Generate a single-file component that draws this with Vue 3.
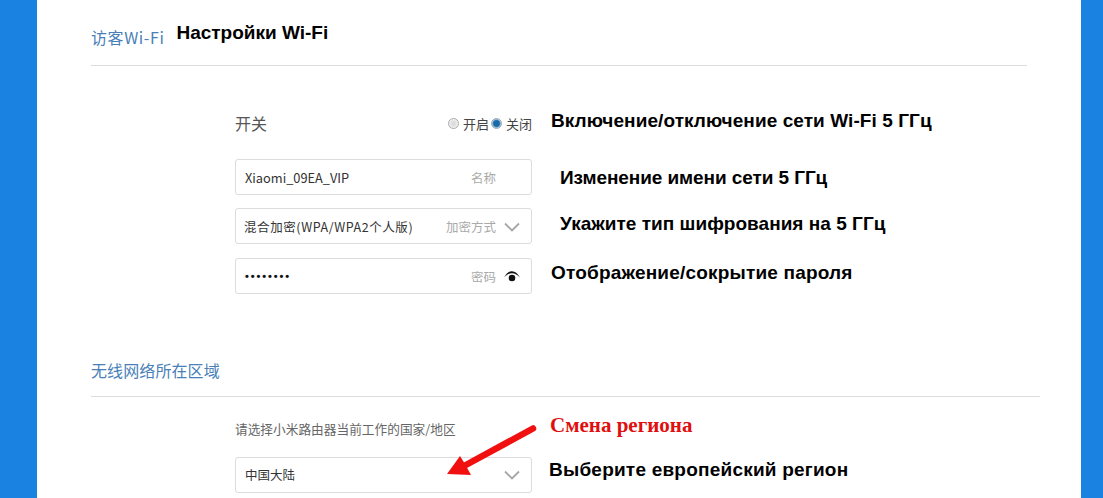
<script setup>
const fields = [
  { id: 'name', value: 'Xiaomi_09EA_VIP', label: '名称', icon: '', note: 'Изменение имени сети 5 ГГц', indent: true },
  { id: 'enc', value: '混合加密(WPA/WPA2个人版)', label: '加密方式', icon: 'chevron', note: 'Укажите тип шифрования на 5 ГГц', indent: true },
  { id: 'pwd', value: '••••••••', label: '密码', icon: 'eye', note: 'Отображение/сокрытие пароля', indent: false }
]
</script>

<template>
  <div class="page">
    <main class="card">
      <header class="head head-first">
        <h2 class="title">访客Wi-Fi</h2>
        <span class="note note-title">Настройки Wi-Fi</span>
      </header>

      <section class="rows rows-first">
        <div class="row row-switch">
          <div class="control switch">
            <span class="switch-label">开关</span>
            <span class="radios">
              <i class="radio"></i><span>开启</span>
              <i class="radio radio-on"></i><span>关闭</span>
            </span>
          </div>
          <span class="note">Включение/отключение сети Wi-Fi 5 ГГц</span>
        </div>

        <div v-for="f in fields" :key="f.id" class="row" :class="'row-' + f.id">
          <div class="control box">
            <span class="value" :class="{ dots: f.id === 'pwd' }">{{ f.value }}</span>
            <span class="hint">{{ f.label }}</span>
            <svg v-if="f.icon === 'chevron'" class="icon icon-chev" viewBox="0 0 16 10"><path d="M1 1.500 8 8.500l7-7" fill="none" stroke="#a6a6a6" stroke-width="1.800"/></svg>
            <svg v-if="f.icon === 'eye'" class="icon icon-eye" viewBox="0 0 16 11"><path d="M0 6.500C2.500 2.300 5 .3 8 .3s5.500 2 8 6.200C13.600 3.800 11 2.200 8 2.200S2.400 3.800 0 6.500z" fill="#111"/><circle cx="8" cy="7" r="3.300" fill="#111"/></svg>
          </div>
          <span class="note" :class="{ 'note-indent': f.indent }">{{ f.note }}</span>
        </div>
      </section>

      <header class="head head-second">
        <h2 class="title">无线网络所在区域</h2>
      </header>

      <section class="region">
        <div class="row row-ask">
          <p class="control ask">请选择小米路由器当前工作的国家/地区</p>
          <span class="note note-red">Смена региона</span>
        </div>
        <div class="row row-select">
          <div class="control box">
            <span class="value">中国大陆</span>
            <svg class="icon" viewBox="0 0 16 10"><path d="M1 1.500 8 8.500l7-7" fill="none" stroke="#a6a6a6" stroke-width="1.800"/></svg>
          </div>
          <span class="note note-tight">Выберите европейский регион</span>
        </div>
        <svg class="arrow" viewBox="0 0 100 60" width="100" height="60">
          <path d="M87 9.500 18 47" stroke="#f01010" stroke-width="6.500" stroke-linecap="round" fill="none"/>
          <path d="M1 55 14 37 19 45 25 56z" fill="#f01010"/>
        </svg>
      </section>
    </main>
  </div>
</template>

<style scoped>
.page {
  display: flex;
  height: 498px;
  overflow: hidden;
  padding: 0 22px 0 37px;
  background: #1a82e0;
  font-family: "Noto Sans CJK SC", "Noto Sans", sans-serif;
}
.card {
  flex: 1;
  min-width: 0;
  padding: 0 41px 0 54px;
  background: #fff;
}
.head {
  display: flex;
  border-bottom: 1px solid #dcdcdc;
}
.head-first {
  height: 65px;
  margin-right: 13px;
}
.head-second {
  height: 66px;
  margin-top: 37px;
  align-items: flex-end;
  padding-bottom: 15px;
  box-sizing: border-box;
}
.head-second .title {
  letter-spacing: .1px;
}
.title {
  margin: 0;
  font-size: 16px;
  font-weight: 400;
  line-height: 22px;
  color: #4a7fb8;
}
.head-first .title {
  margin-top: 26px;
  letter-spacing: .6px;
}
.note-title {
  margin: 19px 0 0 12px;
  line-height: 28px;
}
.note {
  font-family: "Liberation Sans", Arial, sans-serif;
  font-size: 19px;
  font-weight: 700;
  color: #000;
  white-space: nowrap;
}
.rows {
  padding: 0 0 0 144px;
}
.rows-first {
  padding-top: 39px;
}
.row {
  display: flex;
  align-items: center;
  height: 36px;
}
.row-switch {
  margin-bottom: 18px;
}
.row-switch .note {
  margin-bottom: 4px;
  letter-spacing: .08px;
}
.row-name .note { margin-top: 2px; letter-spacing: -.08px; }
.row-enc .note { margin-bottom: 4px; letter-spacing: .03px; }
.row-pwd .note { margin-bottom: 6px; letter-spacing: .19px; }
.row-select .note { margin-bottom: 10px; letter-spacing: .22px; }
.row-enc { margin-top: 13px; }
.row-pwd { margin-top: 14px; }
.control {
  flex: none;
  width: 297px;
  box-sizing: border-box;
  margin-right: 19px;
}
.switch {
  display: flex;
  align-items: center;
  justify-content: space-between;
  color: #555;
}
.switch-label {
  font-size: 16px;
}
.radios {
  display: flex;
  align-items: center;
  font-size: 13px;
  color: #444;
}
.radio {
  width: 9px;
  height: 9px;
  margin-right: 4px;
  border: 1px solid #aaa;
  border-radius: 50%;
  background: radial-gradient(circle, #ddd 30%, #f4f4f4 70%);
}
.radio-on {
  margin-left: 2px;
  border-color: #9ab;
  background: radial-gradient(circle, #1a6aa8 45%, #cfe0ec 75%);
}
.box {
  display: flex;
  align-items: center;
  height: 36px;
  padding: 0 11px 0 9px;
  border: 1px solid #dcdcdc;
  border-radius: 3px;
  font-size: 13px;
  color: #333;
}
.value {
  flex: 1;
  white-space: nowrap;
}
.row-name .value {
  font-size: 12.800px;
}
.row-enc .value {
  font-size: 12.500px;
  letter-spacing: .58px;
  margin-left: -1px;
}
.row-select .value {
  padding-bottom: 2px;
  font-size: 12.500px;
}
.dots {
  font-family: "Liberation Sans", Arial, sans-serif;
  font-size: 11px;
  font-weight: 700;
  letter-spacing: 1.900px;
  color: #111;
}
.hint {
  color: #aaa;
  font-size: 12.500px;
}
.row-name .hint {
  margin-right: 24px;
}
.icon {
  flex: none;
  width: 16px;
  height: 10px;
  margin-left: 8px;
}
.icon-chev {
  margin-top: 2px;
}
.icon-eye {
  height: 11px;
}
.note-indent {
  margin-left: 9px;
}
.region {
  position: relative;
  padding: 0 0 0 144px;
}
.row-ask {
  height: 60px;
}
.ask {
  margin-top: 2px;
  margin-bottom: 0;
  font-size: 12.700px;
  color: #666;
}
.note-red {
  margin-left: -1px;
  margin-bottom: 4px;
  font-family: "Liberation Serif", "Times New Roman", serif;
  font-size: 21px;
  color: #e01010;
}
.note-tight {
  margin-left: -2px;
}
.arrow {
  position: absolute;
  left: 355px;
  top: 22px;
}
</style>

<style>
html, body { margin: 0; }
</style>
